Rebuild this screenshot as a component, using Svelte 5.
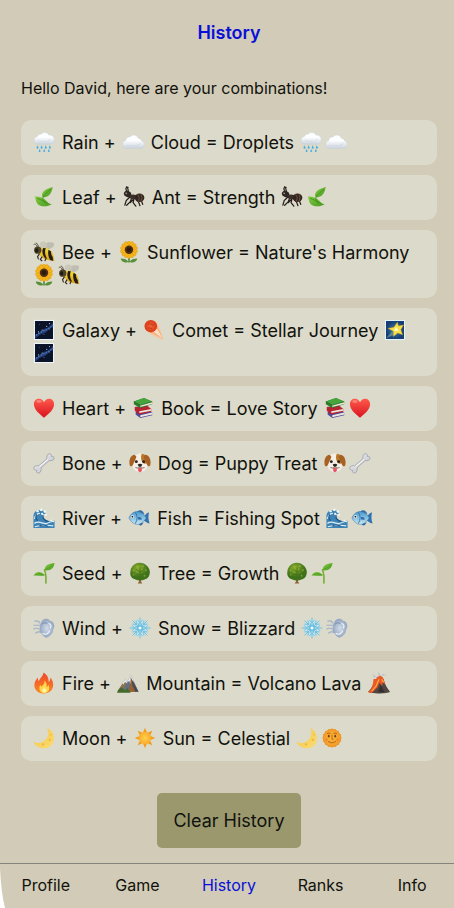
<script lang="ts">
  interface Combo {
    a: [string, string];
    b: [string, string];
    result: string;
    icons: string[];
  }

  const name = 'David';
  const tabs = ['Profile', 'Game', 'History', 'Ranks', 'Info'];

  let active = $state('History');
  let combos = $state<Combo[]>([
    { a: ['rain', 'Rain'], b: ['cloud', 'Cloud'], result: 'Droplets', icons: ['rain', 'cloud'] },
    { a: ['leaf', 'Leaf'], b: ['ant', 'Ant'], result: 'Strength', icons: ['ant', 'leaf'] },
    { a: ['bee', 'Bee'], b: ['sunflower', 'Sunflower'], result: "Nature's Harmony", icons: ['sunflower', 'bee'] },
    { a: ['galaxy', 'Galaxy'], b: ['comet', 'Comet'], result: 'Stellar Journey', icons: ['star', 'galaxy'] },
    { a: ['heart', 'Heart'], b: ['book', 'Book'], result: 'Love Story', icons: ['book', 'heart'] },
    { a: ['bone', 'Bone'], b: ['dog', 'Dog'], result: 'Puppy Treat', icons: ['dog', 'bone'] },
    { a: ['wave', 'River'], b: ['fish', 'Fish'], result: 'Fishing Spot', icons: ['wave', 'fish'] },
    { a: ['seed', 'Seed'], b: ['tree', 'Tree'], result: 'Growth', icons: ['tree', 'seed'] },
    { a: ['wind', 'Wind'], b: ['snow', 'Snow'], result: 'Blizzard', icons: ['snow', 'wind'] },
    { a: ['fire', 'Fire'], b: ['mountain', 'Mountain'], result: 'Volcano Lava', icons: ['volcano'] },
    { a: ['moon', 'Moon'], b: ['sun', 'Sun'], result: 'Celestial', icons: ['moon', 'sunface'] },
  ]);

  const range = (n: number) => Array.from({ length: n }, (_, i) => i);
  const spin = (n: number, shape: string) =>
    range(n).map(i => `<g transform="rotate(${(i * 360) / n} 12 12)">${shape}</g>`).join('');

  // 24x24 artwork, gradients live in the shared <defs> below
  const ICONS: Record<string, string> = {
    rain: `<path d="M5 14.500a4.300 4.300 0 0 1-.3-8.500A4.500 4.500 0 0 1 9 3.300 5.300 5.300 0 0 1 17.500 4.500a4.800 4.800 0 0 1 1.500 10z" fill="url(#g-cloud)" stroke="#c3ccd5" stroke-width=".4"/>
      <path d="M6 10q3 3 6 1q4 2 7-2" fill="none" stroke="#d3dae1" stroke-width=".8"/>
      <g fill="#45aee3"><path d="M4.500 15.500l1.600 2.600a1.200 1.200 0 0 1-2.300.5zM9 15.500l1.600 2.600a1.200 1.200 0 0 1-2.300.5zM13.500 15.500l1.600 2.600a1.200 1.200 0 0 1-2.300.5zM18 15.500l1.600 2.600a1.200 1.200 0 0 1-2.300.5zM7 19.500l1.400 2.400a1.200 1.200 0 0 1-2.200.4zM12 19.500l1.400 2.400a1.200 1.200 0 0 1-2.200.4zM17 19.500l1.400 2.400a1.200 1.200 0 0 1-2.200.4z"/></g>`,
    cloud: `<path d="M4.500 19a4.400 4.400 0 0 1-.3-8.700 4 4 0 0 1 4.300-3.800 5.500 5.500 0 0 1 9.500 1.500 4.200 4.200 0 0 1 3.500 2.800 4.200 4.200 0 0 1-1.500 8.200z" fill="url(#g-cloud)" stroke="#c3cad3" stroke-width=".4"/>
      <path d="M4 15.500q4 2 7 .3 5 2 9-2" fill="none" stroke="#ccd4dd" stroke-width=".8"/>`,
    leaf: `<path d="M21.500 1c-7 2-11.500 4.500-11.700 9 0 2.200 2 2.700 4 2 4.500-1.200 7-5.500 7.700-11z" fill="url(#g-leaf)"/>
      <path d="M2 11.500c4-.5 9.500 1 12 4 1.500 2 3.500 4 6.500 4.500-5 3-12.500 3-15.500-.5-2-2-2-5.500-3-8z" fill="url(#g-leaf)"/>
      <path d="M19.500 3.500c-3.500 3-6.500 5-8.500 8.500-1 2 0 5 2.500 6.500M4.500 13.500c4 1 8 4 11.500 5.500" fill="none" stroke="#3b8a18" stroke-width=".9"/>`,
    ant: `<g fill="none" stroke="#211b19" stroke-width="1.300" stroke-linecap="round"><path d="M5 7C2 3 3 1 5.500 1.500M6 7C5 3 6 2 4 .8M7.500 12L3.500 16l-1.500 5M9.500 13l-1.500 4-4 4M12 14l-1 4 3 4M14 13.500l3 4 1.500 4M13 13l-5 5M15 13l5 3 1.500 4"/></g>
      <ellipse cx="5" cy="8.800" rx="4.200" ry="3.300" transform="rotate(25 5 8.800)" fill="#2e2724"/><ellipse cx="11" cy="11.800" rx="3.800" ry="2.600" fill="#3b302b"/><ellipse cx="18" cy="12.800" rx="5.300" ry="4.600" fill="#33261f"/>
      <path d="M16 9q3 3 1 8M19.500 9q2.500 3.500 0 8" stroke="#806053" stroke-width=".8" fill="none"/><circle cx="3.500" cy="8" r="1" fill="#9d9088"/>`,
    bee: `<path d="M11 9C8 1 22 0 23 3c1 3-4 6-10 7z" fill="#b9b7ac" fill-opacity=".85"/><path d="M9 9C3-1 14-1 15.500 3c.8 3-2 5-4 7z" fill="#c9c6b9" fill-opacity=".9"/>
      <path d="M5 8C4 3 2 3 .8 4M6 7.500C6 4 4 2 3 2" fill="none" stroke="#2b241b" stroke-width=".8"/>
      <path d="M6.500 8c6-2 14 1 15.500 7l1.300 7c-5-1-10-1-13-4-3-2-5-6-3.800-10z" fill="url(#g-bee)"/>
      <path d="M11 7.500c-1.500 3-1 7 1.500 10.500l3 1.500c-2.500-4-3-8-1.500-11.500zM17 9.500c-1 3-.5 8 2 11.500l3 .5-.5-4c-1.500-2-2-4-1.700-6z" fill="#241d15"/>
      <circle cx="5.200" cy="10" r="4" fill="#50422a"/><ellipse cx="4" cy="10.300" rx="1.700" ry="2.300" fill="#201b16"/>
      <path d="M7 14l-2 3 1 3M10 17l-2 3 2 2M14 19l-1 3" fill="none" stroke="#2b2118" stroke-width="1.200"/>`,
    sunflower: `<path d="M12 15v8.500" stroke="#397b25" stroke-width="1.500"/><path d="M11.500 23c-3 1-8 0-8.500-4 4 0 7 1 8.500 4zM12.500 23c3 1 8 0 8.500-4-4 0-7 1-8.500 4z" fill="#56913a"/>
      <g transform="translate(0 -2.500)">${spin(14, '<ellipse cx="12" cy="6" rx="2" ry="3.600" fill="#f6b719" stroke="#d98a0c" stroke-width=".4"/>')}<circle cx="12" cy="12" r="4.600" fill="#503016"/><circle cx="12" cy="12" r="2.600" fill="#2f1c10"/></g>`,
    galaxy: `<rect x="1" y="1" width="22" height="22" fill="#edf5fa"/><rect x="2.200" y="2.200" width="19.600" height="19.600" fill="#0b1328"/>
      <path d="M2.200 18C7 16 9 11 14 10s5-4 7.800-6v5c-5 1-6 6-11 7s-5 4-8.600 5z" fill="#203b76"/><path d="M3 18c4-3 8-5 11-6s5-4 8-5" fill="none" stroke="#4a6fae" stroke-width="1.500" stroke-dasharray="2 1"/>
      <g fill="#b7cff4"><circle cx="6" cy="14" r=".6"/><circle cx="10" cy="12" r=".6"/><circle cx="15" cy="8" r=".6"/><circle cx="18" cy="11" r=".5"/><circle cx="12" cy="17" r=".5"/><circle cx="7" cy="6" r=".4"/><circle cx="18" cy="5" r=".6"/></g>`,
    comet: `<path d="M14 2.500c4 5 6 12 8.500 20.500C15 20 7 17 3 12z" fill="#f5c8a4"/><path d="M14 5c3 4 5 10 8 17C16 18 9 16 6 13z" fill="#f6b184"/><path d="M15 10l6 11-9-7z" fill="#fbe2c5"/>
      <circle cx="8.500" cy="7.800" r="6.800" fill="url(#g-comet)"/><path d="M5 6q2-2 4 0t4-1M5 10q3-1 5 1" fill="none" stroke="#c9351a" stroke-width="1"/>`,
    star: `<rect x="1" y="1" width="22" height="22" fill="#e2f3f9"/><rect x="2.200" y="2.200" width="19.600" height="19.600" fill="url(#g-night)"/>
      <path d="M2.200 21L10 12l4 4z" fill="#719aa0" fill-opacity=".7"/><path d="M14.500 3.500l1.300 4 5.500-1-3 5.200 2 5.500-5.300-2-4.800 3.800.2-5.700-6-3 6.500-1.300z" fill="#f8df48" stroke="#cda726" stroke-width=".5"/><path d="M13 8.500l3 4-5 .5z" fill="#fffbd0"/>`,
    heart: `<path d="M12 22.500C8 19 1 14 1 7.800 1 4 3.500 1.800 6.500 1.800c2.500 0 4.500 1.500 5.500 4 1-2.500 3-4 5.500-4 3 0 5.500 2.200 5.500 6 0 6.200-7 11.200-11 14.700z" fill="url(#g-heart)"/><ellipse cx="6.500" cy="5" rx="3" ry="1.600" fill="#ff9a8b" fill-opacity=".65"/>`,
    book: `<path d="M4 16l12-3 6 4v3L9 23l-5-4z" fill="#4c4a9b"/><path d="M9 20l13-3v2L9 22z" fill="#ece7df"/>
      <path d="M3 11l13-2 5 4v3L8 19l-5-4z" fill="#b72431"/><path d="M8 15.500l13-2.500v2L8 17.500z" fill="#eee6de"/>
      <path d="M2 5l11-4 9 4v3L9 12 2 8z" fill="#2d7c2b"/><path d="M2 5l11-4 9 4-13 4z" fill="#46a43c"/><path d="M9 9l13-3.500v2L9 11z" fill="#ece6dc"/><path d="M9 9l13-3.800M2 5l7 4" stroke="#24661f" stroke-width=".7"/>`,
    bone: `<path d="M15 7.500c0-2 .3-5.800 3-5.800 2 0 2 2 1.700 3 1.500-.2 3.500.2 3.300 2.300-.3 2.300-3.500 2.500-5.500 2.500L9 17c.2 2-.5 6-3 6-2 0-2.500-1.500-2-3.200-1.500.2-3.300-.3-3.200-2.300.2-2.600 3.500-3 5.500-2.500z" fill="url(#g-bone)" stroke="#979ba3" stroke-width=".8"/><path d="M7 16l9.500-8" stroke="#fff" stroke-width="1"/>`,
    dog: `<path d="M7 3.500C10 1 15 1 17 3.500c4 3 4 8 3 12-1 4-4 6-8 6s-7-2-8-6c-1-4-1-9 3-12z" fill="#f4eee6"/><path d="M14 2c4 0 7 4 6.500 9-2 3-5 2-6.500-1-1.500-3-1-6 0-8z" fill="#b8792b"/>
      <path d="M6 3C2 3.500-.3 8 .7 14c1 3 3 1.500 4-1C6 10 8 7 8 5zM18 3c4 .5 6.300 5 5.300 11-1 3-3 1.500-4-1-1.300-3-3.300-6-3.300-8z" fill="#a86123"/>
      <circle cx="8" cy="10.500" r="1.600" fill="#292019"/><circle cx="16" cy="10.500" r="1.600" fill="#292019"/><path d="M9.500 13.500q2.500-1.500 5 0-.5 2.500-2.500 2.800-2-.3-2.500-2.800z" fill="#292321"/><path d="M7 17q3 1.500 5-.8 2 2.300 5 .8" fill="none" stroke="#5c4334" stroke-width=".8"/><path d="M10 17.500h4v3q-2 3-4 0z" fill="#e95262"/>`,
    wave: `<path d="M.5 23V9C1 5 4 3 8 3.500c4 0 6 2 6.500 5-2-1.500-4-1-4 1 0 4 5 7 13 5.500V23z" fill="#3d83b5"/>
      <path d="M1.500 13c1-4 3-6 6-6M1.500 18c5-4 9 1 13 0s5-3 8.500-2M2 21.500q10-2.500 20-1" fill="none" stroke="#dceef3" stroke-width="1.300"/><path d="M4 8q-2 4 1 7M11 9q-1 5 6 7M7 20.500q4-2 9 .5" fill="none" stroke="#1f5689" stroke-width="1.300"/>
      <g fill="#edf6f5"><circle cx="5" cy="4.500" r="1.300"/><circle cx="9" cy="3" r="1.500"/><circle cx="13" cy="5" r="1.500"/><circle cx="14" cy="8.500" r="1.300"/><circle cx="10" cy="7.500" r="1.200"/><circle cx="20" cy="14.500" r="1"/></g>`,
    fish: `<path d="M10 5q5-4 8 3zM11 18q3 5 6-1z" fill="#316eaa"/><path d="M17 11c2-3 4-5 6-5-1 4-1 7 .5 12-3-.5-5-2-7-4z" fill="#3073b0"/>
      <path d="M1 12C3 7 7 4.500 11 5c4 .4 7 3.500 9 7-3 4-6 7-10 7-4-.2-7-3-9-7z" fill="url(#g-fish)" stroke="#35688e" stroke-width=".5"/><path d="M8 6q4 5 0 12" fill="none" stroke="#2f679a" stroke-width=".9"/><path d="M11 11q4-1 4 3l-4-.5z" fill="#2c70ad"/><circle cx="4.800" cy="10.500" r="1.700" fill="#fff"/><circle cx="4.800" cy="10.500" r="1" fill="#151b21"/>`,
    seed: `<path d="M12.500 8.500c1.500 4 2 9 1.500 14.500" fill="none" stroke="#74ae30" stroke-width="1.700" stroke-linecap="round"/><path d="M12.500 9C13 3 17 2 23.500 1c-.5 5-4 9-11 8z" fill="url(#g-leaf)"/><path d="M13 14.500C8 9 3 10 .5 15c3-1 8 1 12.500-.5z" fill="url(#g-leaf)"/><path d="M13 8.500Q18 7 22 2.500M2 14q5-3 10.500 0" fill="none" stroke="#56971e" stroke-width=".7"/>`,
    tree: `<path d="M10.500 17l.5 4-1.500 2.500h5L13 21l.5-4z" fill="#8e6435"/><path d="M7 19C3 18.500.8 15 1.500 11 1.500 6 5 1.500 10 1c6-.8 11 3 12.500 8 1 5-1.500 9.500-5.500 10-3 1.500-7 1.500-10 0z" fill="url(#g-tree)"/>
      <path d="M12 17V6M12 11L8 8M12 14l-4-1M12 11l4-3M12 14l4-1" fill="none" stroke="#42701a" stroke-width=".8"/><g fill="#9fbd36" fill-opacity=".6"><circle cx="9" cy="5" r="1.200"/><circle cx="15" cy="4.500" r="1.200"/><circle cx="5" cy="9" r="1"/><circle cx="14" cy="8" r="1"/><circle cx="9" cy="11" r="1"/><circle cx="18.500" cy="9" r="1"/><circle cx="5" cy="14" r="1"/><circle cx="17" cy="15" r="1"/></g>`,
    wind: `<path d="M9 6C10 1.500 16 .5 18.500 4c4.500.5 6 6 3.500 9.500 0 4.500-4 8-7.500 9-2-.5-4-2-5-4.500-2-.5-3-2.500-2-4.500-.5-3 0-5 1.500-7.500z" fill="url(#g-wind)"/><path d="M17.500 7c2 1 2.500 3 1.500 5M11 18c3 2 6 0 7-3" fill="none" stroke="#edf2f7" stroke-width="1.300" stroke-linecap="round"/><path d="M9.500 8q3-3 6-1" fill="none" stroke="#7589aa" stroke-width="1"/><path d="M2 4.500q4-1 5.500 2M1 9h6M.8 13q3-1.500 6 0M3 17.500q2-2 5-1" fill="none" stroke="#a0b2ca" stroke-width="1.300" stroke-linecap="round"/>`,
    snow: `<circle cx="12" cy="12" r="9.500" fill="#bfe4ef" fill-opacity=".7"/>${spin(8, '<path d="M12 12V1M12 6.500L9.500 3.500M12 6.500l2.500-3M12 10L10 7.500M12 10l2-2.500" fill="none" stroke="#63bde1" stroke-width=".9" stroke-linecap="round"/>')}<circle cx="12" cy="12" r="1.500" fill="#ecfaff"/>`,
    fire: `<path d="M11.500.5C11 5 7 7 6.500 10 5.500 9 5.300 7.500 5.500 6 1.500 10 1 14 2 17.500 3.500 21.500 7.500 23.500 12 23.500c6 0 10-4 10-9.500 0-3-1-5.500-3-8 0 2-.5 4-2 5 .5-4-1.500-8-5.500-10.500z" fill="url(#g-fire)"/><path d="M12.500 9c.5 4-2 5-3 7-1-.5-1.300-1.500-1.300-2.500-2 3-2 9 4 9.500 6 0 6.500-6 4.500-9-.3 1.500-1 2-1.700 2.500.2-3-.5-5-2.500-7.500z" fill="#ffd64c"/><path d="M12 16c0 2-2 3-2 5 1 2 4 2 5 0 0-2-2-3-3-5z" fill="#fff2a0"/>`,
    mountain: `<path d="M.5 21L9 8l7 13z" fill="#8a7350"/><path d="M6 21.500L15 3l8.500 18.500z" fill="#5f6f84"/><path d="M15 3l3.500 7.500-2.500-1-1.500 4-1-4-2.500 2zM9 8l2.500 4.500-2.800-1.500-1.700 2.500-1-1z" fill="#e9eef2"/><path d="M15 5l-.5 8-2.500 8.500h9z" fill="#96602f"/><path d="M16 8l1 7 3 6.500h3.500z" fill="#4a4a4d"/><path d="M0 22.500c2-5 3-4 5-6l4 4 2-3 4 5z" fill="#436a2b"/>`,
    volcano: `<path d="M11 6C6 5 5 4 6 3M13 6c-2-4 0-6-2-5.500M14 6c1-3 4-4 5-2" fill="none" stroke="#bcc2cd" stroke-width="2" stroke-dasharray="2 1"/><path d="M0 21.500c4-3 6-9 9-14h8c1 6 4 10 7 14-3 2.500-21 2.500-24 0z" fill="#504541"/><path d="M9 7.500c1-3 3-2 4-4 1 2 4 1 4 5l2 5-3-2-.5 4-3-4-2 5-6 6c-2 1-3 0-4-1 4-3 5-8 5.500-14z" fill="#ed5827"/><path d="M12 8l-3 7-5 6M15 8l2 3" stroke="#ffb13c" stroke-width="1.200" fill="none"/><path d="M14 14l-3 8h7z" fill="#332f30"/>`,
    moon: `<path d="M15.500 1.200c6 3 9 9.500 6.500 15.300-2.500 6.500-10 8-15.500 5.500-3.200-1.300-5-3.500-6-6 3.500 2.300 8.500 2 12-1 4.500-3.600 5-9 3-13.800z" fill="url(#g-moon)"/><g fill="#d9a52c" fill-opacity=".6"><circle cx="18.500" cy="14" r="1.200"/><circle cx="11" cy="19" r="1.200"/><circle cx="19.500" cy="8.500" r=".8"/></g>`,
    sun: `${spin(8, '<path d="M12 .8l1.900 4.700h-3.800z" fill="#f39b19"/>')}<circle cx="12" cy="12" r="6.800" fill="url(#g-sun)"/>`,
    sunface: `${spin(16, '<path d="M12 1l2 4h-4z" fill="#f2a12b"/>')}<circle cx="12" cy="12" r="9.600" fill="url(#g-face)" stroke="#e78a17" stroke-width=".7"/><ellipse cx="8.500" cy="10" rx="1" ry="1.500" fill="#77400f"/><ellipse cx="15.500" cy="10" rx="1" ry="1.500" fill="#77400f"/><path d="M7 7q2-1 3 0M14 7q2-1 3 0M12 9v4.500h1M8 16q4 3 8 0" fill="none" stroke="#ad6216" stroke-width="1" stroke-linecap="round"/><circle cx="6" cy="14" r="1.600" fill="#ee7d26" fill-opacity=".6"/><circle cx="18" cy="14" r="1.600" fill="#ee7d26" fill-opacity=".6"/>`,
  };
</script>

{#snippet icon(key: string)}<svg class="icon" viewBox="0 0 24 24" aria-hidden="true">{@html ICONS[key]}</svg>{/snippet}

<svg class="defs" width="0" height="0" aria-hidden="true">
  <defs>
    <linearGradient id="g-cloud" x2="0" y2="1"><stop offset="0.4" stop-color="#fdfeff" /><stop offset="1" stop-color="#cbd3dc" /></linearGradient>
    <linearGradient id="g-leaf" x2="1" y2="1"><stop stop-color="#86cc41" /><stop offset="1" stop-color="#459a22" /></linearGradient>
    <linearGradient id="g-bee" x2="0" y2="1"><stop stop-color="#f7df37" /><stop offset="1" stop-color="#d69d17" /></linearGradient>
    <radialGradient id="g-comet"><stop stop-color="#f06534" /><stop offset="1" stop-color="#d83918" /></radialGradient>
    <radialGradient id="g-night"><stop stop-color="#4183ac" /><stop offset="1" stop-color="#153d73" /></radialGradient>
    <linearGradient id="g-heart" x2="0" y2="1"><stop stop-color="#ff5a4c" /><stop offset="1" stop-color="#d9141f" /></linearGradient>
    <linearGradient id="g-bone" x2="1" y2="1"><stop stop-color="#f6f6f8" /><stop offset="1" stop-color="#b7bac2" /></linearGradient>
    <linearGradient id="g-fish" x2="0" y2="1"><stop stop-color="#4798cf" /><stop offset="1" stop-color="#c8e8f3" /></linearGradient>
    <radialGradient id="g-tree" cx="0.4" cy="0.3"><stop stop-color="#8fb02d" /><stop offset="1" stop-color="#3f721b" /></radialGradient>
    <radialGradient id="g-wind"><stop stop-color="#d2dde9" /><stop offset="1" stop-color="#93a5c1" /></radialGradient>
    <linearGradient id="g-fire" x2="0" y2="1"><stop stop-color="#f0452c" /><stop offset="1" stop-color="#f98b20" /></linearGradient>
    <linearGradient id="g-moon" x2="1" y2="1"><stop stop-color="#f5c444" /><stop offset="1" stop-color="#fbdc70" /></linearGradient>
    <radialGradient id="g-sun"><stop stop-color="#ffd04a" /><stop offset="1" stop-color="#f9ac2c" /></radialGradient>
    <radialGradient id="g-face"><stop stop-color="#fcb83c" /><stop offset="1" stop-color="#f39a28" /></radialGradient>
  </defs>
</svg>

<div class="screen">
  <header><h1>History</h1></header>

  <main>
    <p class="hello">Hello {name}, here are your combinations!</p>
    <ul>
      {#each combos as c}
        <li>
          {@render icon(c.a[0])} {c.a[1]} + {@render icon(c.b[0])} {c.b[1]} = {c.result}
          {#each c.icons as key}{@render icon(key)}{/each}
        </li>
      {/each}
    </ul>
    <button class="clear" onclick={() => (combos = [])}>Clear History</button>
  </main>

  <nav>
    {#each tabs as tab}
      <a href="#{tab.toLowerCase()}" class:active={tab === active} onclick={() => (active = tab)}>{tab}</a>
    {/each}
  </nav>
  <svg class="corner" viewBox="0 0 6 40" aria-hidden="true"><path d="M0 0Q1 24 5 40H0z" fill="#fff" /></svg>
</div>

<style>
  :global(body) {
    background: #d1cbb7;
  }
  .defs { position: absolute; }
  .screen {
    position: relative;
    display: flex;
    flex-direction: column;
    min-height: 100vh;
    overflow: hidden;
    background: #d1cbb7;
    color: #11120d;
    font-family: Inter, "Liberation Sans", sans-serif;
    font-size: 16px;
  }
  header {
    padding: 22px 0;
    text-align: center;
  }
  h1 {
    margin: 0 0 0 4px;
    font-size: 18px;
    line-height: 22px;
    font-weight: 600;
    color: #0a10d8;
  }
  main {
    flex: 1;
    display: flex;
    flex-direction: column;
    padding: 11px 17px 14px 21px;
  }
  .hello {
    margin: 0 0 21px;
    line-height: 22px;
  }
  ul {
    display: flex;
    flex-direction: column;
    gap: 10px;
    margin: 0 0 32px;
    padding: 0;
    list-style: none;
  }
  li {
    padding: 11px;
    border-radius: 10px;
    background: #dcdaca;
    font-size: 18px;
    line-height: 23px;
  }
  .icon {
    width: 22px;
    height: 22px;
    margin: 0 2px 0 1px;
    vertical-align: -4px;
  }
  .clear {
    align-self: center;
    padding: 16px;
    border: 0;
    border-radius: 5px;
    background: #9b986e;
    color: inherit;
    font: inherit;
    font-size: 18px;
    line-height: 23px;
    cursor: pointer;
  }
  nav {
    display: grid;
    grid-template-columns: repeat(5, 1fr);
    margin-right: -4px;
    border-top: 1px solid #85837a;
  }
  nav a {
    padding: 10px 0 12px;
    line-height: 22px;
    text-align: center;
    text-decoration: none;
    color: inherit;
  }
  nav a.active { color: #0a10d8; }
  .corner {
    position: absolute;
    left: 0;
    bottom: 0;
    width: 6px;
    height: 40px;
  }
</style>
